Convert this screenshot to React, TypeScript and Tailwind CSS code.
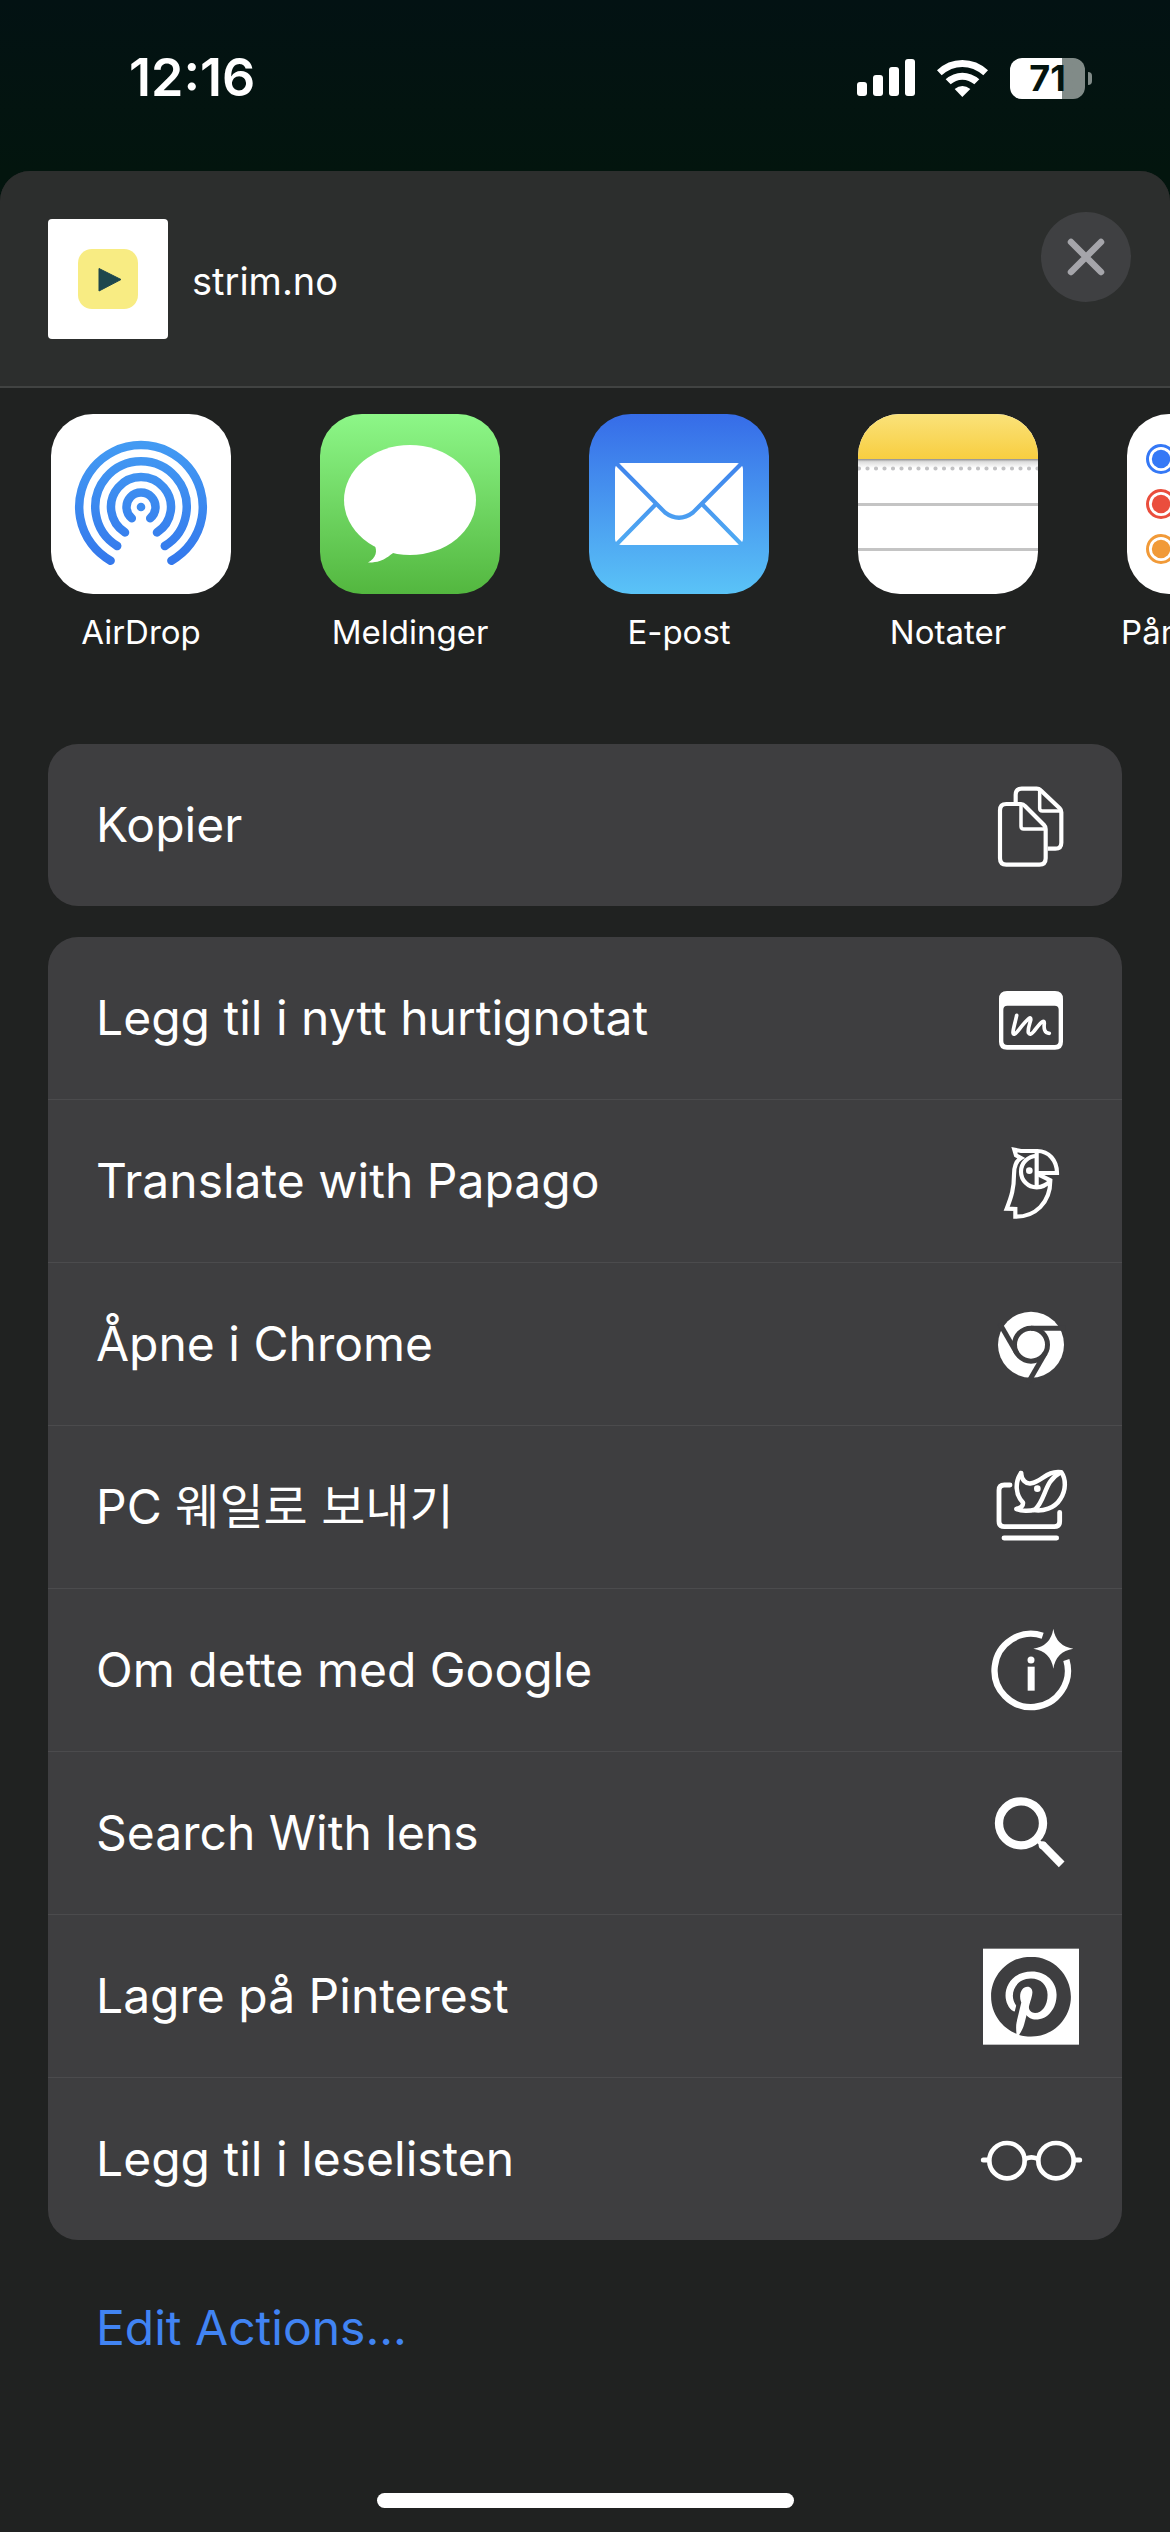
import type { ReactNode } from "react";
import { SiPinterest } from "react-icons/si";

function AppIcon({ children }: { children: ReactNode }) {
  return (
    <svg viewBox="0 0 180 180" aria-hidden="true" className="h-[180px] w-[180px] rounded-[42px]">
      {children}
    </svg>
  );
}

function AirDropIcon() {
  return (
    <AppIcon>
      <defs>
        <linearGradient id="airdrop" gradientUnits="userSpaceOnUse" x1="0" y1="27" x2="0" y2="150">
          <stop offset="0" stopColor="#439bf3" />
          <stop offset="1" stopColor="#3478ec" />
        </linearGradient>
      </defs>
      <rect width="180" height="180" fill="#fff" />
      <g fill="none" stroke="url(#airdrop)" strokeWidth="8.5" strokeLinecap="round">
        <path d="M59.6 146.7A61.8 61.8 0 1 1 120.4 146.7" />
        <path d="M66.2 132A45.7 45.7 0 1 1 113.8 132" />
        <path d="M74 118.4A30 30 0 1 1 106 118.4" />
        <path d="M80.8 104.2A14.5 14.5 0 1 1 99.2 104.2" />
      </g>
      <circle cx="90" cy="93" r="4.3" fill="#3d8cf0" />
    </AppIcon>
  );
}

function MessagesIcon() {
  return (
    <AppIcon>
      <defs>
        <linearGradient id="messages" x1="0" y1="0" x2="0" y2="1">
          <stop offset="0" stopColor="#8df788" />
          <stop offset="1" stopColor="#53b73f" />
        </linearGradient>
      </defs>
      <rect width="180" height="180" fill="url(#messages)" />
      <ellipse cx="90" cy="86" rx="66" ry="55" fill="#fff" />
      <path d="M48 148.5C56 144 58 137 54 130L76 138C70 139 66 149 48 148.5Z" fill="#fff" />
    </AppIcon>
  );
}

function MailIcon() {
  return (
    <AppIcon>
      <defs>
        <linearGradient id="mail" gradientUnits="userSpaceOnUse" x1="0" y1="0" x2="0" y2="180">
          <stop offset="0" stopColor="#366ce8" />
          <stop offset="1" stopColor="#5ac3f7" />
        </linearGradient>
      </defs>
      <rect width="180" height="180" fill="url(#mail)" />
      <rect x="26" y="49" width="128" height="82" rx="6" fill="#fff" />
      <g fill="none" stroke="url(#mail)" strokeWidth="4.2">
        <path d="M26 48L76 98.500Q90 109 104 98.500L154 48" />
        <path d="M67 90L26 132M113 90L154 132" />
      </g>
    </AppIcon>
  );
}

function NotesIcon() {
  return (
    <AppIcon>
      <defs>
        <linearGradient id="notes" x1="0" y1="0" x2="0" y2="1">
          <stop offset="0" stopColor="#fae27a" />
          <stop offset="1" stopColor="#f8ce40" />
        </linearGradient>
        <linearGradient id="notes-shadow" x1="0" y1="0" x2="0" y2="1">
          <stop offset="0" stopColor="#8c8c8c" />
          <stop offset="0.3" stopColor="#dcdcdc" />
          <stop offset="1" stopColor="#fff" />
        </linearGradient>
      </defs>
      <rect width="180" height="180" fill="#fff" />
      <rect width="180" height="45" fill="url(#notes)" />
      <rect y="45" width="180" height="9" fill="url(#notes-shadow)" />
      <path d="M1 54.500H182" stroke="#c2c2c4" strokeWidth="4.200" strokeLinecap="round" strokeDasharray="0 8.500" />
      <path d="M0 90.500H180M0 135.500H180" stroke="#c4c4c4" strokeWidth="3" />
    </AppIcon>
  );
}

function RemindersIcon() {
  return (
    <AppIcon>
      <rect width="180" height="180" fill="#fff" />
      {[
        { y: 45, color: "#3478f6" },
        { y: 90, color: "#ea4e3d" },
        { y: 135, color: "#f19a38" },
      ].map((dot) => (
        <g key={dot.y}>
          <circle cx="34" cy={dot.y} r="13.5" fill="none" stroke={dot.color} strokeWidth="3" />
          <circle cx="34" cy={dot.y} r="9.2" fill={dot.color} />
          <path d={`M64 ${dot.y}H180`} stroke="#c4c4c4" strokeWidth="3" />
        </g>
      ))}
    </AppIcon>
  );
}

function ActionIcon({ viewBox, children }: { viewBox: string; children: ReactNode }) {
  return (
    <svg
      viewBox={viewBox}
      aria-hidden="true"
      fill="none"
      stroke="#fff"
      strokeLinecap="round"
      strokeLinejoin="round"
      className="h-[100px] w-[100px] shrink-0 overflow-visible"
    >
      {children}
    </svg>
  );
}

const copyIcon = (
  <ActionIcon viewBox="123 106 300 300">
    <g strokeWidth="12.5" strokeLinecap="butt">
      <path d="M243 193H199Q180 193 180 212V356Q180 375 199 375H298Q317 375 317 356V268Q317 261 312 256L255 199Q250 193 243 193Z" />
      <path d="M227 188V165Q227 147 245 147H290Q297 147 302 152L359 206Q364 211 364 218V309Q364 327 346 327H323" />
    </g>
    <g strokeWidth="10.5">
      <path d="M243 198V260Q243 268 251 268H312" />
      <path d="M299 152V206Q299 214 307 214H359" />
    </g>
  </ActionIcon>
);

const quickNoteIcon = (
  <ActionIcon viewBox="123 685 300 300">
    <path
      d="M201 754H345Q369 754 369 778V906Q369 930 345 930H201Q177 930 177 906V778Q177 754 201 754ZM202 798Q190 798 190 810V904Q190 916 202 916H344Q356 916 356 904V810Q356 798 344 798Z"
      fill="#fff"
      fillRule="evenodd"
      stroke="none"
    />
    <path
      d="M230 827C226 848 219 868 219 879Q220 890 232 876C244 861 255 846 266 837Q274 831 272 842C268 856 263 868 265 879Q270 889 281 876C290 865 298 852 307 846Q313 842 313 851C311 866 313 881 328 881"
      strokeWidth="11"
    />
  </ActionIcon>
);

const papagoIcon = (
  <ActionIcon viewBox="123 34 300 300">
    <g strokeWidth="12.5" strokeLinecap="butt" strokeLinejoin="miter">
      <path d="M290 160H351C351 122 326 94 292 94H243L223 90L228 107L243 115C228 124 222 140 222 165C222 205 215 230 200 267L226 268V291C285 292 331 250 331 182L290 162" />
      <path d="M290 94V203" />
      <path d="M290 109A47 47 0 0 0 290 203Q314 202 331 184" />
    </g>
    <circle cx="268" cy="153" r="10" fill="#fff" stroke="none" />
  </ActionIcon>
);

const chromeIcon = (
  <ActionIcon viewBox="123 523 300 300">
    <circle cx="273" cy="675" r="99" fill="#fff" stroke="none" />
    <g stroke="#3e3e40" strokeWidth="15" strokeLinecap="butt">
      <circle cx="273" cy="675" r="49.500" />
      <path d="M273 625.500H376" />
      <path d="M273 625.500H376" transform="rotate(120 273 675)" />
      <path d="M273 625.500H376" transform="rotate(240 273 675)" />
    </g>
  </ActionIcon>
);

const whaleIcon = (
  <ActionIcon viewBox="123 52 300 300">
    <g strokeWidth="14.5">
      <path d="M210 136H193Q177 136 177 152V245Q177 261 193 261H343Q359 261 359 245V218" />
      <path d="M192 295H350" />
      <path d="M243 100C224 128 226 165 249 189Q250 203 229 208C243 215 270 215 285 210C318 180 312 125 360 99" strokeWidth="13.500" />
      <path d="M243 100C245 121 257 134 274 131C305 125 322 92 364 98C378 118 379 150 361 178C344 206 308 216 280 211" strokeWidth="13.500" />
    </g>
    <circle cx="292" cy="147" r="10" fill="#fff" stroke="none" />
  </ActionIcon>
);

const aboutIcon = (
  <ActionIcon viewBox="123 541 300 300">
    <path d="M308 588A110 110 0 1 0 379 661" strokeWidth="19" strokeLinecap="butt" />
    <path d="M340 567Q348 619 400 627Q348 635 340 687Q332 635 280 627Q332 619 340 567Z" fill="#fff" stroke="none" />
    <circle cx="273" cy="661" r="10.500" fill="#fff" stroke="none" />
    <rect x="263" y="681" width="21" height="72" fill="#fff" stroke="none" />
  </ActionIcon>
);

const lensIcon = (
  <ActionIcon viewBox="123 70 300 300">
    <circle cx="243" cy="191" r="66" strokeWidth="25" />
    <path d="M290 240L306 256" strokeWidth="12" />
    <path d="M308 256L365 314" strokeWidth="24" strokeLinecap="butt" />
    <circle cx="308" cy="257" r="12" fill="#fff" stroke="none" />
  </ActionIcon>
);

const pinterestIcon = (
  <ActionIcon viewBox="123 559 300 300">
    <rect x="129" y="567" width="288" height="288" fill="#fff" stroke="none" />
    <SiPinterest x={153} y={591} size={240} color="#3e3e40" />
  </ActionIcon>
);

const glassesIcon = (
  <ActionIcon viewBox="123 1048 300 300">
    <g strokeWidth="14">
      <circle cx="201" cy="1203" r="53" />
      <circle cx="348" cy="1203" r="53" />
      <path d="M257 1197Q274 1189 292 1197" strokeLinecap="butt" />
      <path d="M130 1201H144M405 1201H419" strokeWidth="15" />
    </g>
  </ActionIcon>
);

const apps = [
  { label: "AirDrop", icon: <AirDropIcon /> },
  { label: "Meldinger", icon: <MessagesIcon /> },
  { label: "E-post", icon: <MailIcon /> },
  { label: "Notater", icon: <NotesIcon /> },
  { label: "Påminnelser", icon: <RemindersIcon /> },
];

const actions = [
  { label: "Legg til i nytt hurtignotat", icon: quickNoteIcon },
  { label: "Translate with Papago", icon: papagoIcon },
  { label: "Åpne i Chrome", icon: chromeIcon },
  { label: "PC 웨일로 보내기", icon: whaleIcon },
  { label: "Om dette med Google", icon: aboutIcon },
  { label: "Search With lens", icon: lensIcon },
  { label: "Lagre på Pinterest", icon: pinterestIcon },
  { label: "Legg til i leselisten", icon: glassesIcon },
];

function ActionRow({ label, icon }: { label: string; icon: ReactNode }) {
  return (
    <button type="button" className="flex h-[162px] w-full items-center justify-between pr-[41px] pl-12 text-left">
      <span>{label}</span>
      {icon}
    </button>
  );
}

function StatusBar() {
  return (
    <div className="flex h-[171px] items-start justify-between bg-linear-to-b from-[#031213] to-[#03150e] pt-[47px] pr-[78px] pl-[129px]">
      <span className="text-[52px] leading-[62px] font-semibold">12:16</span>
      <div className="flex h-[62px] items-center gap-[22px]">
        <svg viewBox="0 0 58 38" aria-hidden="true" className="h-[38px] w-[58px]" fill="#fff">
          <rect x="0" y="23" width="10" height="14" rx="3" />
          <rect x="16" y="16" width="10" height="21" rx="3" />
          <rect x="32" y="8" width="10" height="29" rx="3" />
          <rect x="48" y="0" width="10" height="37" rx="3" />
        </svg>
        <svg viewBox="288 57 153 111" aria-hidden="true" className="h-[37px] w-[51px]" fill="#fff">
          <path d="M288 88Q320 57 364 57Q408 57 441 88L427 103Q398 78 364 78Q330 78 302 103Z" />
          <path d="M314 115Q336 95 364 95Q392 95 415 115L400 130Q384 116 364 116Q344 116 329 130Z" />
          <path d="M341 144Q364 126 388 144L364 168Z" />
        </svg>
        <div className="flex items-center gap-[3px]">
          <div className="flex h-[41px] w-[75px] items-center justify-center rounded-[12px] bg-linear-to-r from-white from-70% to-[#818b88] to-70% text-[36px] leading-none font-bold text-[#04140f]">
            71
          </div>
          <div className="h-[13px] w-[4px] rounded-r-full bg-[#818b88]" />
        </div>
      </div>
    </div>
  );
}

export default function App() {
  return (
    <div className="flex min-h-screen flex-col overflow-hidden bg-[#03150e] font-[Inter,'Noto_Sans_CJK_KR',sans-serif] text-white">
      <StatusBar />
      <main className="flex grow flex-col rounded-t-[30px] bg-[#202221]">
        <header className="flex items-start justify-between rounded-t-[30px] border-b-2 border-[#414342] bg-[#2c2e2d] pt-[41px] pr-[39px] pb-[47px] pl-12">
          <div className="mt-[7px] flex items-center gap-6">
            <div className="flex h-[120px] w-[120px] items-center justify-center rounded-[4px] bg-white">
              <svg viewBox="0 0 60 60" aria-hidden="true" className="h-[60px] w-[60px]">
                <rect width="60" height="60" rx="14" fill="#f8ec83" />
                <path d="M21 19.500L43 30.500L21 42Z" fill="#1d474d" stroke="#1d474d" strokeLinejoin="round" />
              </svg>
            </div>
            <h1 className="pt-1 text-[38px] leading-[48px] font-normal">strim.no</h1>
          </div>
          <button
            type="button"
            aria-label="Lukk"
            className="flex h-[90px] w-[90px] items-center justify-center rounded-full bg-[#3f4042]"
          >
            <svg viewBox="0 0 38 38" aria-hidden="true" className="h-[38px] w-[38px]">
              <path d="M4 4L34 34M34 4L4 34" stroke="#a5a5aa" strokeWidth="6.500" strokeLinecap="round" />
            </svg>
          </button>
        </header>

        <nav aria-label="Apper" className="flex gap-[89px] overflow-hidden pt-[26px] pl-[51px]">
          {apps.map((app) => (
            <button key={app.label} type="button" className="flex w-[180px] shrink-0 flex-col items-center gap-[17px]">
              {app.icon}
              <span className="text-[33px] leading-[42px] whitespace-nowrap">{app.label}</span>
            </button>
          ))}
        </nav>

        <div className="flex flex-col gap-[31px] px-12 pt-[91px] text-[48px] leading-[62px]">
          <section className="rounded-[30px] bg-[#3e3e40]">
            <ActionRow label="Kopier" icon={copyIcon} />
          </section>
          <ul className="divide-y divide-[#4b4b4d] rounded-[30px] bg-[#3e3e40]">
            {actions.map((action) => (
              <li key={action.label}>
                <ActionRow label={action.label} icon={action.icon} />
              </li>
            ))}
          </ul>
          <button type="button" className="mt-[26px] self-start pl-12 text-[#4184f3]">
            Edit Actions...
          </button>
        </div>

        <div className="mx-auto mt-auto mb-6 h-[15px] w-[417px] rounded-full bg-white" />
      </main>
    </div>
  );
}
